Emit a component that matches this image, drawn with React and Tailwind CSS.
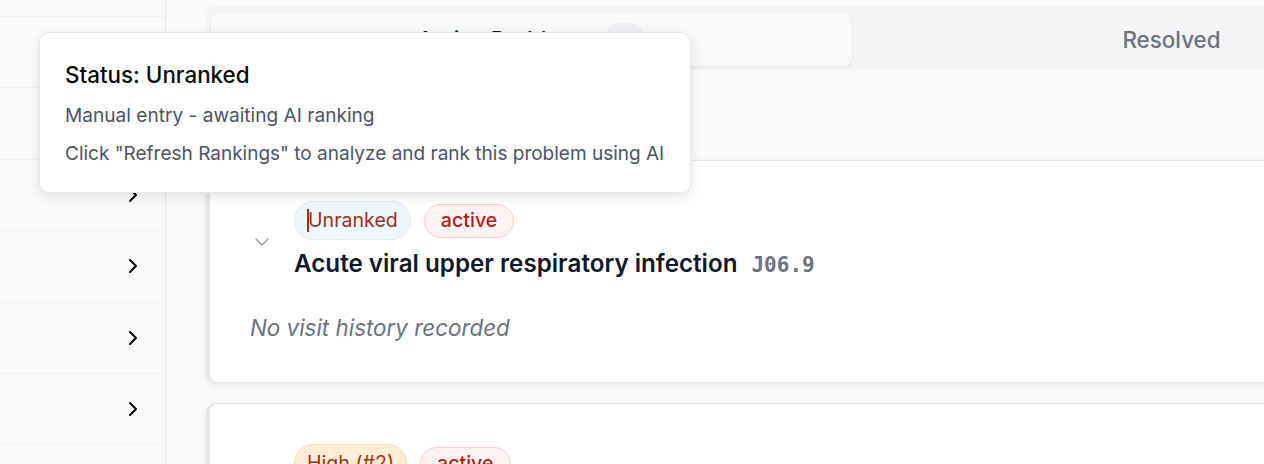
import React from 'react';
import { ChevronRight, ChevronDown } from 'lucide-react';

const sidebarRows = [0, 1, 2, 3, 4, 5, 6];

const Sidebar = () => (
  <div className="w-[166px] shrink-0 bg-[#f9fafb] border-r border-[#e5e7eb] h-[464px] overflow-hidden">
    <div className="h-[16px]"></div>
    {sidebarRows.map((r) => (
      <div key={r} className="h-[71.4px] border-t border-[#f0f1f3] flex items-center justify-end pr-[20px]">
        <ChevronRight size={24} strokeWidth={2} className="text-black" />
      </div>
    ))}
  </div>
);

const Pill = ({ children, className }) => (
  <span className={'inline-flex items-center rounded-full border text-[19.6px] leading-none whitespace-nowrap ' + className}>
    {children}
  </span>
);

const ProblemCard = ({ rank, rankClass, title, code, caret }) => (
  <div className="bg-white rounded-[10px] border border-[#e5e7eb] border-l-4 shadow-[0_2px_6px_rgba(0,0,0,0.08)] pl-[40px] pt-[40px] pb-[38px]">
    <div className="flex items-center gap-[20px]">
      <ChevronDown size={24} strokeWidth={1.6} className="text-[#9ca3af] mt-[4px]" />
      <div className="flex flex-col">
        <div className="flex items-center gap-[13px] h-[39px]">
          <Pill className={'h-[39px] px-[12px] ' + rankClass}>
            {caret && <span className="w-[2px] h-[23px] bg-[#9a3412] mr-[-1px]"></span>}
            {rank}
          </Pill>
          <Pill className="h-[34px] px-[16px] bg-[#fef2f2] border-[#fecaca] text-[#b91c1c] font-medium">active</Pill>
        </div>
        <div className="flex items-baseline gap-[14px] mt-[9px] h-[30px] whitespace-nowrap">
          <span className="text-[24.2px] leading-[30px] font-semibold text-[#111827]">{title}</span>
          <span className="text-[21px] leading-[30px] font-bold text-[#6b7280] font-['DejaVu_Sans_Mono',monospace]">{code}</span>
        </div>
      </div>
    </div>
    <p className="mt-[33px] text-[22.4px] leading-[32px] italic text-[#6b7280]">No visit history recorded</p>
  </div>
);

const Tooltip = () => (
  <div className="absolute left-[39px] top-[32px] w-[652px] h-[161px] bg-white rounded-[10px] border border-[#e5e7eb] shadow-[0_4px_12px_rgba(0,0,0,0.10)] px-[25px] pt-[28px] z-10 whitespace-nowrap">
    <p className="text-[22.4px] font-medium text-[#0a0a0a] leading-[28px]">Status: Unranked</p>
    <p className="text-[19.1px] text-[#4b5563] leading-[26px] mt-[13px]">Manual entry - awaiting AI ranking</p>
    <p className="text-[19px] text-[#4b5563] leading-[26px] mt-[13px]">Click "Refresh Rankings" to analyze and rank this problem using AI</p>
  </div>
);

export default function App() {
  return (
    <div className="relative w-[1264px] h-[464px] overflow-hidden flex font-['Inter',sans-serif] bg-[#fafafa]">
      <Sidebar />
      <div className="flex-1 min-w-0 pl-[40px] pt-[6px]">
        <div className="w-[1290px]">
          <div className="h-[64px] bg-[#f3f4f6] rounded-[10px] px-[5px] pt-[7px] pb-[4px] flex">
            <div className="w-[641px] bg-[#f9f9fa] rounded-[8px] shadow-[0_1px_3px_rgba(0,0,0,0.08)] flex items-center justify-center gap-[12px]">
              <span className="text-[22.4px] font-medium text-[#111827]">Active Problems</span>
              <span className="h-[34px] w-[42px] rounded-full bg-[#eeeff2] flex items-center justify-center text-[16px] text-[#374151]">3</span>
            </div>
            <div className="flex-1 flex items-center justify-center">
              <span className="text-[22.4px] font-medium text-[#6b7280]">Resolved</span>
            </div>
          </div>
          <div className="h-[90px]"></div>
          <div className="flex flex-col gap-[20px]">
            <ProblemCard
              rank="Unranked"
              caret
              rankClass="bg-[#eff6ff] border-[#dbeafe] text-[#9a3412]"
              title="Acute viral upper respiratory infection"
              code="J06.9"
            />
            <ProblemCard
              rank="High (#2)"
              rankClass="bg-[#ffedd5] border-[#fed7aa] text-[#9a3412]"
              title="Essential hypertension"
              code="I10"
            />
          </div>
        </div>
      </div>
      <Tooltip />
    </div>
  );
}
